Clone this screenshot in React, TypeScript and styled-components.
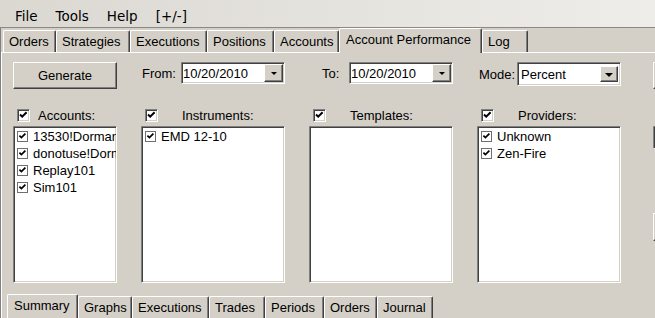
import React from 'react';
import styled, { createGlobalStyle, css } from 'styled-components';

const GlobalStyle = createGlobalStyle`
  * { box-sizing: border-box; }
  html, body {
    margin: 0;
    padding: 0;
    overflow: hidden;
    background: #d4d0c8;
  }
  body {
    font-family: "Liberation Sans", Arial, sans-serif;
    font-size: 13px;
    color: #000;
  }
`;

const raised = css`
  border: 1px solid;
  border-color: #fff #404040 #404040 #fff;
  box-shadow: inset -1px -1px #808080;
  background: #d4d0c8;
`;

const sunken = css`
  border: 1px solid;
  border-color: #808080 #fff #fff #808080;
  box-shadow: inset 1px 1px #404040, inset -1px -1px #d4d0c8;
  background: #fff;
`;

const Window = styled.div`
  width: 655px;
  height: 318px;
  display: flex;
  flex-direction: column;
  overflow: hidden;
  background: #d4d0c8;
`;

const MenuBar = styled.div`
  flex: none;
  height: 28px;
  display: flex;
  align-items: flex-start;
  gap: 18px;
  padding: 8px 0 0 15px;
  background: linear-gradient(to right, #dbd8d2, #eeede9);
  border-bottom: 1px solid #8a8884;
  font-family: "DejaVu Sans", Verdana, sans-serif;
  font-size: 13.5px;
  line-height: 16px;
`;

const MenuItem = styled.span`
  white-space: nowrap;
`;

const Frame = styled.div`
  flex: 1;
  min-height: 0;
  display: flex;
  flex-direction: column;
  border-left: 1px solid #808080;
`;

const TabStrip = styled.div<{ $inset: number; $top?: number }>`
  flex: none;
  height: 24px;
  display: flex;
  align-items: flex-end;
  padding-left: ${p => p.$inset}px;
  margin-top: ${p => p.$top || 0}px;
`;

const Tab = styled.div<{ $w: number; $active?: boolean }>`
  position: relative;
  z-index: ${p => (p.$active ? 1 : 0)};
  width: ${p => p.$w}px;
  height: ${p => (p.$active ? 25 : 22)}px;
  margin-bottom: ${p => (p.$active ? -1 : 0)}px;
  padding: 3px 0 0 ${p => (p.$active ? 6 : 5)}px;
  line-height: 15px;
  white-space: nowrap;
  background: #d4d0c8;
  border-top: 1px solid #fff;
  border-left: 1px solid #fff;
  border-right: 1px solid #404040;
  box-shadow: inset -1px 0 #808080;
  border-radius: 2px 2px 0 0;
`;

const Panel = styled.div`
  flex: 1;
  min-height: 0;
  display: flex;
  flex-direction: column;
  overflow: hidden;
  border-top: 1px solid #fff;
  border-left: 1px solid #fff;
`;

const Body = styled.div`
  flex: none;
  display: flex;
  padding: 9px 0 0 11px;
`;

const Grid = styled.div`
  flex: none;
  display: grid;
  grid-template-columns: 104px repeat(3, 144px);
  column-gap: 24px;
  align-items: start;
`;

const TopCell = styled.div<{ $indent: number }>`
  display: flex;
  align-items: center;
  padding-left: ${p => p.$indent}px;
`;

const FieldLabel = styled.span`
  line-height: 15px;
  white-space: nowrap;
`;

const PushButton = styled.button`
  ${raised};
  width: 100%;
  height: 27px;
  padding: 0;
  font-family: "Liberation Sans", Arial, sans-serif;
  font-size: 13px;
  color: #000;
`;

const Picker = styled.div<{ $combo?: boolean }>`
  ${sunken};
  width: 104px;
  height: ${p => (p.$combo ? 24 : 22)}px;
  margin-left: auto;
  display: flex;
  align-items: center;
  padding: ${p => (p.$combo ? '1px 2px 1px 3px' : '1px 1px 1px 1px')};
  line-height: 15px;
`;

const PickerText = styled.span`
  flex: 1;
  white-space: nowrap;
`;

const DropButton = styled.div<{ $combo?: boolean }>`
  ${raised};
  flex: none;
  width: ${p => (p.$combo ? 18 : 19)}px;
  height: ${p => (p.$combo ? 16 : 18)}px;
  display: flex;
  align-items: center;
  justify-content: center;

  &::after {
    content: '';
    border-style: solid;
    border-color: #000 transparent transparent transparent;
    border-width: ${p => (p.$combo ? '4px 4px 0 4px' : '3px 3px 0 3px')};
    margin-top: 1px;
  }
`;

const Header = styled.div`
  display: flex;
  align-items: center;
  margin-top: 20px;
  padding-left: 4px;
  height: 13px;
`;

const HeaderLabel = styled.span<{ $gap: number }>`
  margin-left: ${p => p.$gap}px;
  line-height: 15px;
  white-space: nowrap;
`;

const Box3D = styled.span<{ $size: number }>`
  flex: none;
  display: inline-flex;
  width: ${p => p.$size}px;
  height: ${p => p.$size}px;
  background: #fff;
  ${p =>
    p.$size > 12
      ? sunken
      : css`
          border: 1px solid #6f6f6f;
        `};
`;

const ListBox = styled.div`
  ${sunken};
  margin-top: 4px;
  height: 157px;
  padding: 1px;
  overflow: hidden;
`;

const ListRow = styled.div`
  height: 17px;
  display: flex;
  align-items: center;
  gap: 5px;
  padding-left: 2px;
  line-height: 15px;
  white-space: nowrap;
`;

const SideColumn = styled.div`
  flex: none;
  width: 70px;
  margin-left: 32px;
  display: flex;
  flex-direction: column;
`;

const SideButton = styled.div<{ $top: number; $h: number }>`
  ${raised};
  margin-top: ${p => p.$top}px;
  height: ${p => p.$h}px;
`;

const SideField = styled.div<{ $top: number; $h: number }>`
  ${sunken};
  margin-top: ${p => p.$top}px;
  height: ${p => p.$h}px;
`;

const CheckBox = ({ size }: { size: number }) => {
  const inner = size - 2;
  const pts = size > 12 ? '2,4.5 4.2,6.7 8.6,2.3' : '1.4,3.6 3.4,5.6 7.4,1.6';
  return (
    <Box3D $size={size}>
      <svg width={inner} height={inner} viewBox={`0 0 ${inner} ${inner}`}>
        <polyline points={pts} fill="none" stroke="#000" strokeWidth={size > 12 ? 2 : 1.7} />
      </svg>
    </Box3D>
  );
};

const topTabs = [
  { label: 'Orders', w: 53 },
  { label: 'Strategies', w: 74 },
  { label: 'Executions', w: 77 },
  { label: 'Positions', w: 67 },
  { label: 'Accounts', w: 65 },
  { label: 'Account Performance', w: 143, active: true },
  { label: 'Log', w: 46 },
];

const subTabs = [
  { label: 'Summary', w: 71, active: true },
  { label: 'Graphs', w: 54 },
  { label: 'Executions', w: 77 },
  { label: 'Trades', w: 56 },
  { label: 'Periods', w: 59 },
  { label: 'Orders', w: 53 },
  { label: 'Journal', w: 56 },
];

const groups = [
  { title: 'Accounts:', gap: 8, items: ['13530!Dormant', 'donotuse!Dormant', 'Replay101', 'Sim101'] },
  { title: 'Instruments:', gap: 24, items: ['EMD 12-10'] },
  { title: 'Templates:', gap: 24, items: [] as string[] },
  { title: 'Providers:', gap: 24, items: ['Unknown', 'Zen-Fire'] },
];

export default function App() {
  return (
    <Window>
      <GlobalStyle />
      <MenuBar>
        <MenuItem>File</MenuItem>
        <MenuItem>Tools</MenuItem>
        <MenuItem>Help</MenuItem>
        <MenuItem>[+/-]</MenuItem>
      </MenuBar>
      <Frame>
        <TabStrip $inset={2}>
          {topTabs.map(t => (
            <Tab key={t.label} $w={t.w} $active={t.active}>
              {t.label}
            </Tab>
          ))}
        </TabStrip>
        <Panel>
          <Body>
            <Grid>
              <PushButton>Generate</PushButton>
              <TopCell $indent={1}>
                <FieldLabel>From:</FieldLabel>
                <Picker>
                  <PickerText>10/20/2010</PickerText>
                  <DropButton />
                </Picker>
              </TopCell>
              <TopCell $indent={13}>
                <FieldLabel>To:</FieldLabel>
                <Picker>
                  <PickerText>10/20/2010</PickerText>
                  <DropButton />
                </Picker>
              </TopCell>
              <TopCell $indent={2}>
                <FieldLabel>Mode:</FieldLabel>
                <Picker $combo>
                  <PickerText>Percent</PickerText>
                  <DropButton $combo />
                </Picker>
              </TopCell>

              {groups.map(g => (
                <Header key={g.title}>
                  <CheckBox size={13} />
                  <HeaderLabel $gap={g.gap}>{g.title}</HeaderLabel>
                </Header>
              ))}

              {groups.map(g => (
                <ListBox key={g.title + '-list'}>
                  {g.items.map(item => (
                    <ListRow key={item}>
                      <CheckBox size={11} />
                      {item}
                    </ListRow>
                  ))}
                </ListBox>
              ))}
            </Grid>
            <SideColumn>
              <SideButton $top={0} $h={27} />
              <SideField $top={37} $h={23} />
              <SideButton $top={64} $h={28} />
            </SideColumn>
          </Body>
          <TabStrip $inset={5} $top={11}>
            {subTabs.map(t => (
              <Tab key={t.label} $w={t.w} $active={t.active}>
                {t.label}
              </Tab>
            ))}
          </TabStrip>
        </Panel>
      </Frame>
    </Window>
  );
}
